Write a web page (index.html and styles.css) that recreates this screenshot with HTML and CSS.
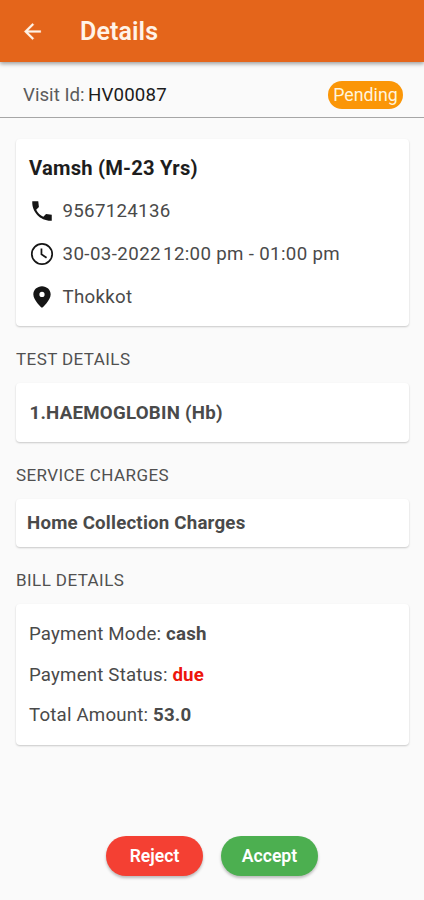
FILE: index.html
```html
<!DOCTYPE html>
<html lang="en">
<head>
<meta charset="utf-8">
<meta name="viewport" content="width=device-width, initial-scale=1">
<title>Details</title>
<link rel="stylesheet" href="styles.css">
</head>
<body>
<header class="appbar">
  <svg class="back" viewBox="0 0 24 24"><path d="M20 11H7.83l5.59-5.59L12 4l-8 8 8 8 1.41-1.41L7.83 13H20v-2z"/></svg>
  <h1 class="appbar-title">Details</h1>
</header>
<section class="visit">
  <p class="visit-id"><span class="visit-label">Visit Id:</span><span class="visit-value">HV00087</span></p>
  <span class="badge">Pending</span>
</section>
<main class="content">
  <section class="card patient">
    <h2 class="patient-name">Vamsh (M-23 Yrs)</h2>
    <div class="info">
      <svg class="icon" viewBox="0 0 24 24"><path d="M21 15.46l-5.27-.61-2.52 2.52c-2.83-1.44-5.15-3.75-6.59-6.59l2.53-2.53L8.54 3H3.030C2.450 13.180 10.820 21.550 21 20.970v-5.510z"/></svg>
      <span class="phone">9567124136</span>
    </div>
    <div class="info">
      <svg class="icon clock" viewBox="0 0 24 24"><circle cx="12" cy="12" r="9.4"/><path d="M11.500 7v5.300l4.700 3.200"/></svg>
      <span class="date">30-03-2022</span><span class="time">12:00 pm - 01:00 pm</span>
    </div>
    <div class="info">
      <svg class="icon" viewBox="0 0 24 24"><path d="M12 2C7.580 2 4 5.300 4 9.600 4 15 12 22 12 22s8-7 8-12.400C20 5.300 16.420 2 12 2zm0 10a2.400 2.400 0 1 1 0-4.800 2.400 2.400 0 0 1 0 4.800z"/></svg>
      <span class="place">Thokkot</span>
    </div>
  </section>
  <h3 class="section-title">TEST DETAILS</h3>
  <section class="card test">1.HAEMOGLOBIN (Hb)</section>
  <h3 class="section-title">SERVICE CHARGES</h3>
  <section class="card service">Home Collection Charges</section>
  <h3 class="section-title">BILL DETAILS</h3>
  <section class="card bill">
    <p class="bill-row">Payment Mode: <b>cash</b></p>
    <p class="bill-row">Payment Status: <b class="due">due</b></p>
    <p class="bill-row">Total Amount: <b>53.0</b></p>
  </section>
</main>
<footer class="actions">
  <button class="btn reject">Reject</button>
  <button class="btn accept">Accept</button>
</footer>
</body>
</html>
```
FILE: styles.css
```css
* { box-sizing: border-box; }
body {
  margin: 0;
  height: 900px;
  display: flex;
  flex-direction: column;
  background: #fafafa;
  color: #4a4a4a;
  font-family: Roboto, sans-serif;
  font-size: 18.7px;
}
h1, h2, h3, p { margin: 0; }
.appbar {
  height: 62px;
  flex: none;
  display: flex;
  align-items: center;
  padding-left: 19.5px;
  background: #e4651b;
  box-shadow: 0 2px 4px rgba(0, 0, 0, .36);
}
.back { width: 25px; height: 25px; fill: #fff3e8; stroke: #fff3e8; stroke-width: .2; }
.appbar-title {
  margin-left: 35.5px;
  color: #fff3e8;
  font-size: 25px;
  font-weight: 600;
  letter-spacing: .1px;
}
.visit {
  height: 56px;
  flex: none;
  display: flex;
  align-items: center;
  justify-content: space-between;
  padding: 10px 21px 0 23px;
  border-bottom: 1px solid #a6a6a6;
}
.visit-id { display: flex; gap: 3.5px; line-height: 24px; }
.visit-label { color: #5c5c5c; }
.visit-value { color: #1c1c1c; letter-spacing: .15px; }
.badge {
  width: 75px;
  height: 28px;
  border-radius: 14px;
  background: #fb9607;
  color: #fff4dc;
  font-size: 17.8px;
  line-height: 28px;
  text-align: center;
}
.content { padding: 21px 15px 0 16px; }
.card {
  background: #fff;
  border-radius: 4px;
  box-shadow: 0 1px 2px rgba(0, 0, 0, .2);
}
.patient { height: 187px; padding: 8px 13px; letter-spacing: .3px; }
.patient-name {
  color: #1d1d1d;
  font-size: 20.2px;
  font-weight: 700;
  letter-spacing: .2px;
  line-height: 43px;
  height: 42px;
}
.info { height: 43px; display: flex; align-items: center; }
.icon { width: 26px; height: 26px; margin: 0 7.2px 0 .3px; fill: #151515; }
.clock { fill: none; stroke: #151515; stroke-width: 1.6; }
.date { letter-spacing: .42px; }
.time { margin-left: 2px; letter-spacing: .34px; }
.section-title {
  height: 57px;
  color: #505050;
  font-size: 17px;
  font-weight: 400;
  letter-spacing: .42px;
  line-height: 67px;
}
.test, .service { display: flex; align-items: center; font-weight: 700; letter-spacing: .24px; }
.test { height: 59px; padding-left: 13.5px; }
.service { height: 48px; padding-left: 11px; letter-spacing: .2px; }
.bill { height: 141px; padding: 10px 13px; }
.bill-row { line-height: 40.5px; letter-spacing: .18px; }
.due { color: #ed150c; }
.actions { margin-top: 91px; display: flex; justify-content: center; gap: 18px; }
.btn {
  width: 97px;
  height: 40px;
  padding: 0;
  border: 0;
  border-radius: 20px;
  color: #fff;
  font: 600 17.6px Roboto, sans-serif;
  box-shadow: 0 2px 3px rgba(0, 0, 0, .26);
}
.reject { background: #f44033; }
.accept { background: #4caf50; }
```
